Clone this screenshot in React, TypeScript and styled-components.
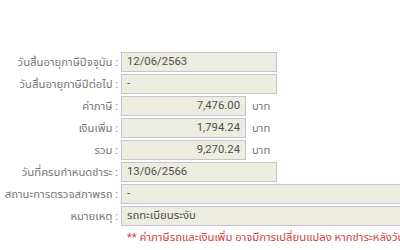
import React from "react";
import styled, { createGlobalStyle } from "styled-components";

const Global = createGlobalStyle`
  html, body { margin: 0; padding: 0; background: #ffffff; }
  body { font-family: "Roboto", "Noto Sans Thai", "Noto Sans", Tahoma, sans-serif; }
`;

const Page = styled.div`
  padding-top: 52px;
  width: 400px;
  height: 250px;
  overflow: hidden;
  box-sizing: border-box;
`;

const Row = styled.div`
  display: flex;
  align-items: center;
  height: 20px;
  margin-bottom: 2px;
  white-space: nowrap;
`;

const Label = styled.div`
  width: 118px;
  flex: none;
  text-align: right;
  font-size: 11.3px;
  color: #777777;
  margin-right: 3px;
`;

const Field = styled.div<{ $w: number; $right?: boolean }>`
  flex: none;
  box-sizing: border-box;
  width: ${(p) => p.$w}px;
  height: 20px;
  line-height: 18px;
  border: 1px solid #c6c1d8;
  background: #ededdf;
  color: #505050;
  font-size: 11.3px;
  padding: 0 5px;
  text-align: ${(p) => (p.$right ? "right" : "left")};
`;

const Unit = styled.span`
  margin-left: 6px;
  font-size: 11.3px;
  color: #777777;
`;

const Note = styled.div`
  margin-left: 127px;
  margin-top: 3px;
  font-size: 11.3px;
  color: #d2423c;
  white-space: nowrap;
`;

const rows: { label: string; value: string; w: number; money?: boolean }[] = [
  { label: "วันสิ้นอายุภาษีปีจจุบัน :", value: "12/06/2563", w: 156 },
  { label: "วันสิ้นอายุภาษีปีต่อไป :", value: "-", w: 156 },
  { label: "ค่าภาษี :", value: "7,476.00", w: 125, money: true },
  { label: "เงินเพิ่ม :", value: "1,794.24", w: 125, money: true },
  { label: "รวม :", value: "9,270.24", w: 125, money: true },
  { label: "วันที่ครบกำหนดชำระ :", value: "13/06/2566", w: 156 },
  { label: "สถานะการตรวจสภาพรถ :", value: "-", w: 300 },
  { label: "หมายเหตุ :", value: "รถทะเบียนระงับ", w: 300 },
];

export default function App() {
  return (
    <Page>
      <Global />
      {rows.map((r) => (
        <Row key={r.label}>
          <Label>{r.label}</Label>
          <Field $w={r.w} $right={r.money}>
            {r.value}
          </Field>
          {r.money && <Unit>บาท</Unit>}
        </Row>
      ))}
      <Note>** ค่าภาษีรถและเงินเพิ่ม อาจมีการเปลี่ยนแปลง หากชำระหลังวันที่ครบกำหนด</Note>
    </Page>
  );
}
